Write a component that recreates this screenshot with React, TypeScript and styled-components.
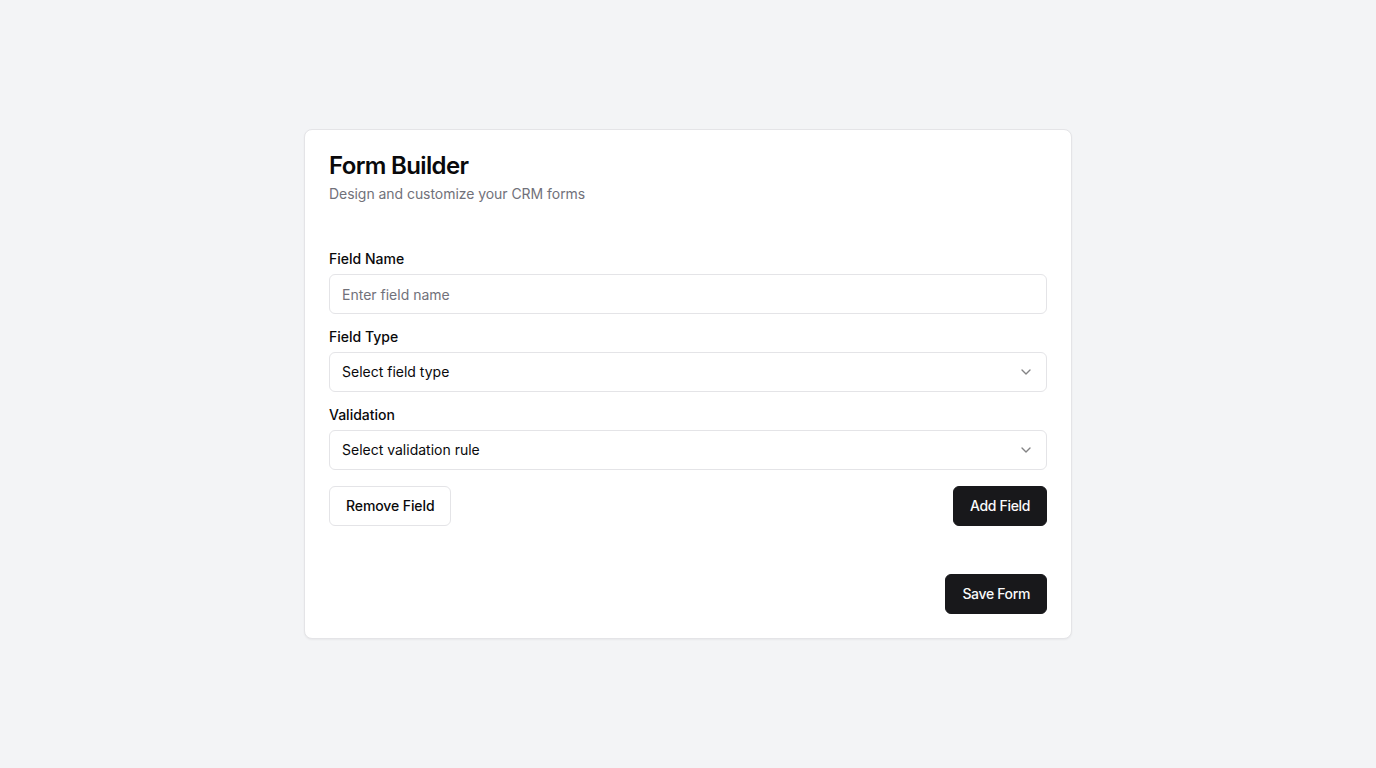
import styled, { createGlobalStyle } from 'styled-components'

const GlobalStyle = createGlobalStyle`
  * { box-sizing: border-box; }
  body {
    margin: 0;
    background: #f3f4f6;
    font-family: Inter, "Noto Sans", sans-serif;
    color: #09090b;
    -webkit-font-smoothing: antialiased;
  }
`

const Page = styled.div`
  min-height: 100vh;
  display: flex;
  align-items: center;
  justify-content: center;
`

const Card = styled.div`
  width: 768px;
  background: #fff;
  border: 1px solid #e4e4e7;
  border-radius: 8px;
  box-shadow: 0 1px 2px rgba(0, 0, 0, 0.05);
`

const Header = styled.div`
  padding: 24px;
  display: flex;
  flex-direction: column;
  gap: 6px;
`

const Title = styled.h2`
  margin: 0;
  font-size: 24px;
  line-height: 24px;
  font-weight: 600;
  letter-spacing: -0.65px;
`

const Description = styled.p`
  margin: 0;
  font-size: 14px;
  line-height: 20px;
  color: #71717a;
  letter-spacing: -0.05px;
`

const Content = styled.div`
  padding: 20px 24px 24px;
  display: flex;
  flex-direction: column;
  gap: 12px;
`

const Field = styled.div`
  display: flex;
  flex-direction: column;
  gap: 6px;
`

const Label = styled.label`
  font-size: 14px;
  line-height: 20px;
  font-weight: 500;
  padding-top: 1px;
  margin-bottom: -1px;
`

const Input = styled.input`
  height: 40px;
  width: 100%;
  border: 1px solid #e4e4e7;
  border-radius: 6px;
  padding: 8px 12px;
  font-family: inherit;
  font-size: 14px;
  color: #09090b;
  background: #fff;
  outline: none;
  &::placeholder { color: #71717a; }
`

const SelectBox = styled.button`
  height: 40px;
  width: 100%;
  border: 1px solid #e4e4e7;
  border-radius: 6px;
  padding: 7px 12px 9px;
  font-family: inherit;
  font-size: 14px;
  color: #09090b;
  background: #fff;
  display: flex;
  align-items: center;
  justify-content: space-between;
  cursor: pointer;
  svg { opacity: 0.5; margin-top: 2px; }
`

const Row = styled.div<{ $end?: boolean }>`
  display: flex;
  justify-content: ${(p) => (p.$end ? 'flex-end' : 'space-between')};
  margin-top: ${(p) => (p.$end ? '36px' : '4px')};
`

const Button = styled.button<{ $variant?: 'outline' | 'solid' }>`
  height: 40px;
  padding: 0 16px 1px;
  border-radius: 6px;
  font-family: inherit;
  font-size: 14px;
  font-weight: 500;
  letter-spacing: ${(p) => (p.$variant === 'outline' ? '-0.1px' : '-0.35px')};
  cursor: pointer;
  border: 1px solid ${(p) => (p.$variant === 'outline' ? '#e4e4e7' : '#18181b')};
  background: ${(p) => (p.$variant === 'outline' ? '#fff' : '#18181b')};
  color: ${(p) => (p.$variant === 'outline' ? '#09090b' : '#fafafa')};
`

const Chevron = () => (
  <svg width="16" height="16" viewBox="0 0 24 24" fill="none" stroke="currentColor" strokeWidth="2" strokeLinecap="round" strokeLinejoin="round">
    <path d="m6 9 6 6 6-6" />
  </svg>
)

const Select = ({ value }: { value: string }) => (
  <SelectBox type="button">
    <span>{value}</span>
    <Chevron />
  </SelectBox>
)

export default function App() {
  return (
    <>
      <GlobalStyle />
      <Page>
        <Card>
          <Header>
            <Title>Form Builder</Title>
            <Description>Design and customize your CRM forms</Description>
          </Header>
          <Content>
            <Field>
              <Label>Field Name</Label>
              <Input placeholder="Enter field name" />
            </Field>
            <Field>
              <Label>Field Type</Label>
              <Select value="Select field type" />
            </Field>
            <Field>
              <Label>Validation</Label>
              <Select value="Select validation rule" />
            </Field>
            <Row>
              <Button $variant="outline">Remove Field</Button>
              <Button>Add Field</Button>
            </Row>
            <Row $end>
              <Button>Save Form</Button>
            </Row>
          </Content>
        </Card>
      </Page>
    </>
  )
}
